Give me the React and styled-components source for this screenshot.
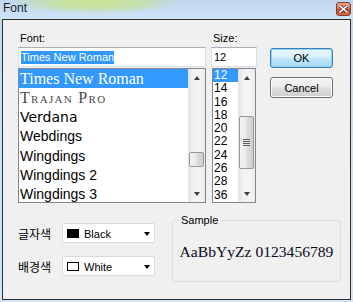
import React from "react";
import styled, { createGlobalStyle } from "styled-components";

const GlobalStyle = createGlobalStyle`
  html, body {
    margin: 0;
    padding: 0;
    background: #ffffff;
  }
  body {
    font-family: "Liberation Sans", Arial, sans-serif;
    font-size: 11px;
    color: #000;
  }
`;

const fonts = [
  { name: "Times New Roman", kind: "times" },
  { name: "Trajan Pro", kind: "trajan" },
  { name: "Verdana", kind: "verdana" },
  { name: "Webdings", kind: "arial" },
  { name: "Wingdings", kind: "arial" },
  { name: "Wingdings 2", kind: "arial" },
  { name: "Wingdings 3", kind: "arial" },
];

const sizes = ["12", "14", "16", "18", "20", "22", "24", "26", "28", "36"];

const App = () => {
  return (
    <>
      <GlobalStyle />
      <Window>
        <TitleBar>
          <Title>Font</Title>
          <CloseButton>
            <svg width="9" height="8" viewBox="0 0 9 8">
              <path
                d="M1 1 L8 7 M8 1 L1 7"
                stroke="#5a2a20"
                strokeWidth="3"
                strokeLinecap="square"
              />
              <path
                d="M1 1 L8 7 M8 1 L1 7"
                stroke="#ffffff"
                strokeWidth="1.6"
                strokeLinecap="square"
              />
            </svg>
          </CloseButton>
        </TitleBar>

        <Body>
          <TopGrid>
            <Column>
              <Label>Font:</Label>
              <TextBox>
                <Selected>Times New Roman</Selected>
              </TextBox>
              <ListBox>
                <Items>
                  {fonts.map((f, i) => (
                    <FontItem key={f.name} $kind={f.kind} $selected={i === 0}>
                      {f.name}
                    </FontItem>
                  ))}
                </Items>
                <ScrollBar thumbTop={66} thumbHeight={15} />
              </ListBox>
            </Column>

            <Column>
              <Label>Size:</Label>
              <TextBox>12</TextBox>
              <SizeList>
                <Items>
                  {sizes.map((s, i) => (
                    <SizeItem key={s} $selected={i === 0}>
                      {s}
                    </SizeItem>
                  ))}
                </Items>
                <ScrollBar thumbTop={30} thumbHeight={53} grip />
              </SizeList>
            </Column>

            <ButtonColumn>
              <Button $default>OK</Button>
              <Button>Cancel</Button>
            </ButtonColumn>
          </TopGrid>

          <BottomRow>
            <ColorGrid>
              <KoLabel>글자색</KoLabel>
              <Combo>
                <Swatch $color="#000" />
                <ComboText>Black</ComboText>
                <DropArrow />
              </Combo>
              <KoLabel>배경색</KoLabel>
              <Combo>
                <Swatch $color="#fff" />
                <ComboText>White</ComboText>
                <DropArrow />
              </Combo>
            </ColorGrid>

            <GroupBox>
              <Legend>Sample</Legend>
              <SampleText>AaBbYyZz 0123456789</SampleText>
            </GroupBox>
          </BottomRow>
        </Body>
      </Window>
    </>
  );
};

const ScrollBar = ({ thumbTop, thumbHeight, grip }) => (
  <ScrollTrack>
    <ArrowButton>
      <Triangle $up />
    </ArrowButton>
    <TrackArea>
      <Thumb style={{ marginTop: thumbTop, height: thumbHeight }}>
        {grip && <Grip />}
      </Thumb>
    </TrackArea>
    <ArrowButton>
      <Triangle />
    </ArrowButton>
  </ScrollTrack>
);

const Window = styled.div`
  width: 353px;
  height: 302px;
  display: flex;
  flex-direction: column;
  background: linear-gradient(180deg, #c0d8ef 0%, #cde2f6 60%, #d3e6f7 100%);
  overflow: hidden;
`;

const TitleBar = styled.div`
  height: 19px;
  flex: none;
  display: flex;
  align-items: flex-start;
  justify-content: space-between;
  padding: 0 2px 0 3px;
  background: radial-gradient(
      ellipse 85px 12px at 95px 2px,
      rgba(200, 228, 146, 1) 0%,
      rgba(200, 228, 146, 0.75) 50%,
      rgba(200, 228, 146, 0) 100%
    ),
    linear-gradient(180deg, #bed6ee 0%, #c8def3 60%, #d1e5f7 100%);
`;

const Title = styled.div`
  font-family: "Liberation Sans", Arial, sans-serif;
  font-size: 12px;
  line-height: 14px;
  margin-top: 1px;
  color: #1c1c1c;
`;

const CloseButton = styled.div`
  width: 15px;
  height: 14px;
  margin-top: 2px;
  box-sizing: border-box;
  border: 1px solid #8b3b2b;
  border-radius: 3px;
  background: linear-gradient(180deg, #eaa58c 0%, #d9785b 45%, #c4462a 55%, #d26a48 100%);
  display: flex;
  align-items: center;
  justify-content: center;
`;

const Body = styled.div`
  flex: 1;
  margin: 0 2px 2px 2px;
  border: 1px solid #2e2e2e;
  background: #f0f0f0;
  padding: 10px 0 0 15px;
`;

const TopGrid = styled.div`
  display: grid;
  grid-template-columns: 188px 46px 71px;
  column-gap: 5px;
  align-items: start;
`;

const Column = styled.div`
  display: flex;
  flex-direction: column;
`;

const Label = styled.div`
  height: 17px;
  line-height: 16px;
  padding-left: 2px;
  font-size: 11px;
  color: #000;
`;

const TextBox = styled.div`
  height: 20px;
  box-sizing: border-box;
  border: 1px solid #dbdfe6;
  border-top-color: #abadb3;
  background: #fff;
  padding: 0 2px;
  display: flex;
  align-items: center;
  font-size: 11px;
`;

const Selected = styled.span`
  background: #3399ff;
  color: #fff;
  line-height: 13px;
`;

const ListBox = styled.div`
  margin-top: 1px;
  height: 135px;
  box-sizing: border-box;
  border: 1px solid #828790;
  background: #fff;
  display: flex;
  overflow: hidden;
`;

const SizeList = styled(ListBox)`
  width: 44px;
  margin-left: 1px;
`;

const Items = styled.div`
  flex: 1;
  display: flex;
  flex-direction: column;
  overflow: hidden;
`;

const fontFor = {
  times: `font-family: "Liberation Serif", "Times New Roman", serif; font-size: 16px;`,
  trajan: `font-family: "Liberation Serif", serif; font-size: 16px; font-variant: small-caps; letter-spacing: 1.3px; color: #4a4a4a;`,
  verdana: `font-family: "DejaVu Sans", Verdana, sans-serif; font-size: 14px;`,
  arial: `font-family: "Liberation Sans", Arial, sans-serif; font-size: 14px;`,
};

const FontItem = styled.div`
  height: 19.4px;
  flex: none;
  line-height: 19.4px;
  padding-left: 1px;
  white-space: nowrap;
  color: #000;
  ${(p) => fontFor[p.$kind]}
  ${(p) => p.$selected && `background: #3399ff; color: #fff;`}
`;

const SizeItem = styled.div`
  height: 13.3px;
  flex: none;
  line-height: 13.3px;
  padding-left: 1px;
  font-size: 12px;
  ${(p) => p.$selected && `background: #3399ff; color: #fff;`}
`;

const ScrollTrack = styled.div`
  width: 17px;
  flex: none;
  display: flex;
  flex-direction: column;
  background: linear-gradient(90deg, #e3e3e3 0%, #f2f2f2 30%, #f4f4f4 70%, #eaeaea 100%);
`;

const ArrowButton = styled.div`
  height: 17px;
  flex: none;
  display: flex;
  align-items: center;
  justify-content: center;
`;

const Triangle = styled.div`
  width: 0;
  height: 0;
  border-left: 3.5px solid transparent;
  border-right: 3.5px solid transparent;
  ${(p) =>
    p.$up
      ? `border-bottom: 4px solid #404040;`
      : `border-top: 4px solid #404040;`}
`;

const TrackArea = styled.div`
  flex: 1;
  display: flex;
  flex-direction: column;
  align-items: center;
`;

const Thumb = styled.div`
  width: 15px;
  box-sizing: border-box;
  border: 1px solid #979797;
  border-radius: 2px;
  background: linear-gradient(90deg, #f2f2f2 0%, #ebebeb 45%, #dcdcdc 55%, #cfcfcf 100%);
  display: flex;
  align-items: center;
  justify-content: center;
`;

const Grip = styled.div`
  width: 7px;
  height: 7px;
  background: repeating-linear-gradient(
    180deg,
    #5e5e5e 0px,
    #5e5e5e 1px,
    #e8e8e8 1px,
    #e8e8e8 2px
  );
`;

const ButtonColumn = styled.div`
  display: flex;
  flex-direction: column;
  gap: 9px;
  padding-left: 8px;
  margin-top: 18px;
`;

const Button = styled.div`
  height: ${(p) => (p.$default ? "20px" : "21px")};
  box-sizing: border-box;
  border: 1px solid ${(p) => (p.$default ? "#3c7fb1" : "#707070")};
  border-radius: 3px;
  background: ${(p) =>
    p.$default
      ? "linear-gradient(180deg, #eaf6fd 0%, #d9f0fc 45%, #bee6fd 55%, #a7d9f5 100%)"
      : "linear-gradient(180deg, #f2f2f2 0%, #ebebeb 45%, #dddddd 55%, #cfcfcf 100%)"};
  box-shadow: ${(p) => (p.$default ? "inset 0 0 0 1px #8fd0f5" : "inset 0 0 0 1px #fcfcfc")};
  display: flex;
  align-items: center;
  justify-content: center;
  font-size: 11px;
  color: #000;
`;

const BottomRow = styled.div`
  display: flex;
  align-items: flex-start;
  margin-top: 10px;
`;

const ColorGrid = styled.div`
  width: 154px;
  flex: none;
  padding-top: 10px;
  display: grid;
  grid-template-columns: 44px 93px;
  row-gap: 13px;
  align-items: center;
`;

const KoLabel = styled.div`
  font-family: "Noto Sans CJK KR", "Liberation Sans", sans-serif;
  font-size: 12px;
  line-height: 14px;
  margin-top: 2px;
  color: #000;
`;

const Combo = styled.div`
  height: 20px;
  box-sizing: border-box;
  border: 1px solid #dadada;
  border-radius: 2px;
  background: #fff;
  display: flex;
  align-items: center;
  padding: 1px 4px 0 4px;
`;

const Swatch = styled.div`
  width: 12px;
  height: 9px;
  box-sizing: border-box;
  border: 1px solid #000;
  background: ${(p) => p.$color};
`;

const ComboText = styled.span`
  margin-left: 5px;
  font-size: 11px;
  color: #000;
`;

const DropArrow = styled.div`
  margin-left: auto;
  width: 0;
  height: 0;
  border-left: 3.5px solid transparent;
  border-right: 3.5px solid transparent;
  border-top: 4px solid #000;
`;

const GroupBox = styled.div`
  position: relative;
  width: 169px;
  height: 62px;
  margin-top: 7px;
  box-sizing: border-box;
  border: 1px solid #d5dfe5;
  border-radius: 3px;
  display: flex;
  align-items: center;
  justify-content: center;
`;

const Legend = styled.div`
  position: absolute;
  top: -8px;
  left: 6px;
  padding: 0 2px;
  background: #f0f0f0;
  font-size: 11px;
  line-height: 14px;
  color: #000;
`;

const SampleText = styled.div`
  font-family: "Liberation Serif", "Times New Roman", serif;
  font-size: 15.6px;
  color: #0a0a1e;
  white-space: nowrap;
  margin-top: 2px;
`;

export default App;
